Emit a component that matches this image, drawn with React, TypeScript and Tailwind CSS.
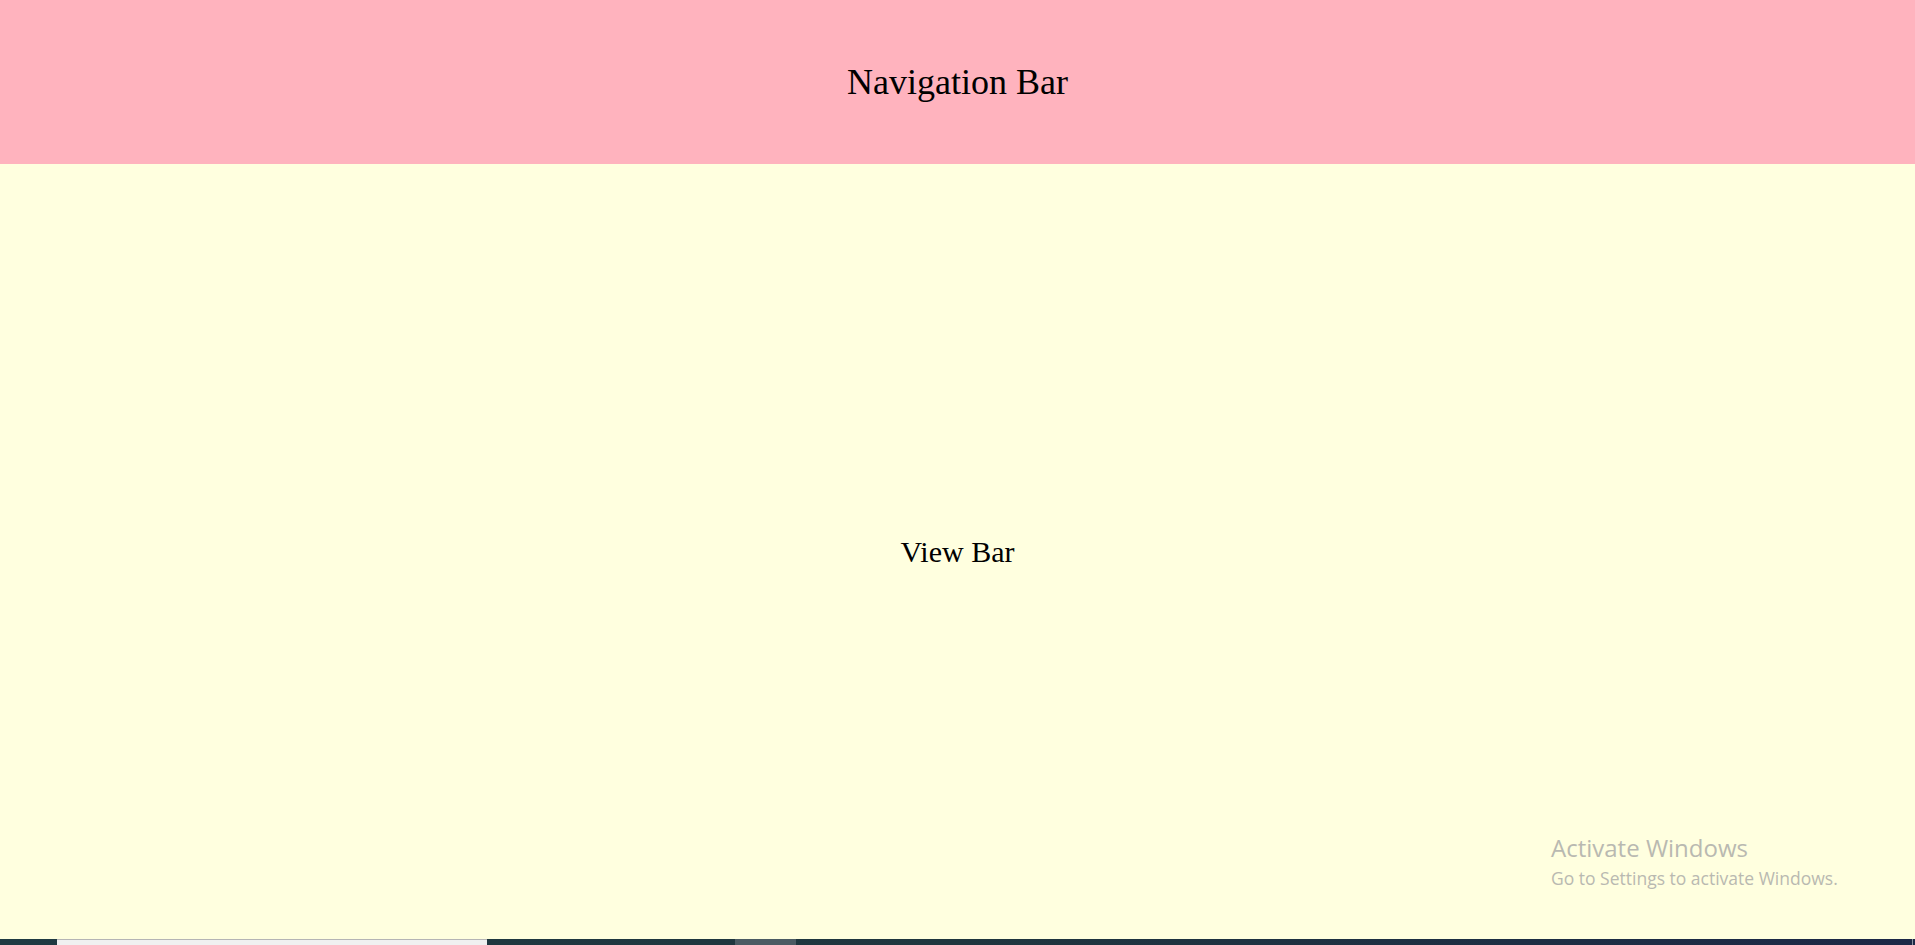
import React from "react";

const App: React.FC = () => {
  return (
    <div className="relative flex h-screen w-full flex-col overflow-hidden font-['Liberation_Serif','Times_New_Roman',serif] text-black">
      {/* Navigation */}
      <header className="flex h-[164px] shrink-0 items-center justify-center bg-[#ffb3be]">
        <h1 className="text-[36px] leading-none">Navigation Bar</h1>
      </header>

      {/* View */}
      <main className="flex flex-1 items-center justify-center bg-[#ffffdf]">
        <h2 className="text-[30px] leading-none">View Bar</h2>
      </main>

      {/* Taskbar strip peeking in at the bottom */}
      <div className="flex h-[6px] shrink-0 bg-gradient-to-r from-[#1f3a42] via-[#1f363e] to-[#1c2846]">
        <div className="w-[57px]" />
        <div className="w-[430px] border-t border-[#b5b5b5] bg-[#f0f0f0]" />
        <div className="w-[248px]" />
        <div className="w-[61px] bg-[#4b5b63]" />
        <div className="flex-1" />
        <div className="w-[1px] bg-[#8a93a0]" />
        <div className="w-[2px]" />
      </div>

      {/* Windows activation watermark */}
      <div className="pointer-events-none absolute left-[1551px] top-[831px] font-['Open_Sans','Noto_Sans',sans-serif] text-[#b9b9b1]">
        <div className="text-[24px] leading-[33px]">Activate Windows</div>
        <div className="text-[17.5px] leading-[28px]">Go to Settings to activate Windows.</div>
      </div>
    </div>
  );
};

export default App;
